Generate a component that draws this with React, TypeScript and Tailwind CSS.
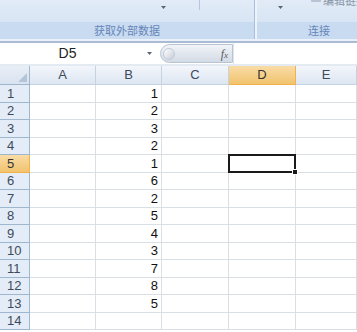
import React from "react";

const vals: (number | null)[] = [1, 2, 3, 2, 1, 6, 2, 5, 4, 3, 7, 8, 5, null];
const cols = ["A", "B", "C", "D", "E"];
const widths = ["w-[66px]", "w-[66px]", "w-[67px]", "w-[67px]", "flex-1"];

function Arrow() {
  return (
    <svg width="5" height="3" viewBox="0 0 5 3" className="block">
      <path d="M0 0 H5 L2.5 3 Z" fill="#5a6678" />
    </svg>
  );
}

export default function App() {
  return (
    <div
      className="w-[357px] h-[332px] overflow-hidden bg-white flex flex-col"
      style={{ fontFamily: '"Liberation Sans", "Noto Sans CJK SC", sans-serif' }}
    >
      {/* Ribbon */}
      <div className="h-[39px] flex bg-[#dee8f5] shrink-0">
        <div className="w-[255px] flex flex-col border-r border-[#a9bfdc]">
          <div className="h-[22px] flex bg-gradient-to-b from-[#e2ebf7] to-[#d8e5f4]">
            <div className="w-[199px] flex justify-end items-start pt-[6px] pr-[33px]">
              <Arrow />
            </div>
            <div className="w-px h-[10px] bg-[#b3c6de]" />
          </div>
          <div className="flex-1 bg-[#c9dbf0] flex items-center justify-center text-[11px] text-[#6585b8]" style={{ fontFamily: '"Noto Sans CJK SC", sans-serif' }}>
            获取外部数据
          </div>
        </div>
        <div className="w-[2px] bg-[#edf3fb]" />
        <div className="flex-1 flex flex-col min-w-0">
          <div className="h-[22px] flex bg-gradient-to-b from-[#e2ebf7] to-[#d8e5f4] overflow-hidden">
            <div className="w-[26px] shrink-0 flex justify-end items-start pt-[6px]">
              <Arrow />
            </div>
            <div className="ml-[28px] -mt-[6px] flex items-start gap-[2px] text-[11px] text-[#8a96a8] leading-[12px] whitespace-nowrap" style={{ fontFamily: '"Noto Sans CJK SC", sans-serif' }}>
              <span className="w-[10px] h-[6px] shrink-0 bg-[#b8c4d4] mt-[2px] rounded-[1px]" />
              <span>编辑链接</span>
            </div>
          </div>
          <div className="flex-1 bg-[#c9dbf0] flex items-center pl-[51px] text-[11px] text-[#6585b8]" style={{ fontFamily: '"Noto Sans CJK SC", sans-serif' }}>
            连接
          </div>
        </div>
      </div>
      <div className="h-[2px] bg-[#eaf1fa] shrink-0" />
      <div className="h-[2px] bg-[#a9bcd4] shrink-0" />

      {/* Formula bar */}
      <div className="h-[21px] flex shrink-0 bg-white">
        <div className="w-[147px] flex items-center justify-center text-[14px] text-[#222] pr-[12px]">
          D5
        </div>
        <div className="w-[13px] flex items-center">
          <Arrow />
        </div>
        <div className="w-[73px] flex items-center my-[1px] rounded-l-full border border-[#b9c4d2] bg-gradient-to-b from-[#f1f4f8] to-[#d3dbe6]">
          <div className="w-[12px] h-[12px] ml-[2px] rounded-full bg-gradient-to-br from-[#ffffff] to-[#c6ced9] border border-[#c1cad6]" />
          <span className="ml-auto mr-[4px] text-[12px] italic text-[#5a5a5a]" style={{ fontFamily: '"Liberation Serif", serif' }}>
            f<span className="text-[9px]">x</span>
          </span>
        </div>
        <div className="w-px bg-[#dfe5ec]" />
        <div className="flex-1 bg-white" />
      </div>
      <div className="h-[2px] bg-[#e4eaf2] shrink-0" />

      {/* Grid */}
      <div className="flex flex-col flex-1 text-[13px] text-[#111]">
        <div className="h-[19px] flex shrink-0">
          <div className="w-[30px] relative bg-gradient-to-b from-[#e9eef6] to-[#d9e3f0] border-r border-b border-[#9eb6ce]">
            <svg width="9" height="9" className="absolute right-[2px] bottom-[2px]">
              <path d="M9 0 V9 H0 Z" fill="#b4c5da" />
            </svg>
          </div>
          {cols.map((c, i) => (
            <div
              key={c}
              className={`${widths[i]} flex items-center justify-center border-r border-b ${
                c === "D"
                  ? "bg-gradient-to-b from-[#f9dca6] to-[#f1c36d] border-[#f2b14a] text-[#333]"
                  : "bg-gradient-to-b from-[#f3f6fb] to-[#dde6f2] border-[#c5d2e2] text-[#3c4a5c]"
              }`}
            >
              {c}
            </div>
          ))}
        </div>
        {vals.map((v, r) => (
          <div key={r} className="h-[17.5px] flex shrink-0">
            <div
              className={`w-[30px] flex items-center pl-[7px] border-r border-b ${
                r === 4
                  ? "bg-gradient-to-b from-[#f9dca6] to-[#f1c36d] border-[#f2b14a] text-[#333]"
                  : "bg-[#e4ecf7] border-[#9eb6ce] text-[#3c4a5c]"
              }`}
            >
              {r + 1}
            </div>
            {cols.map((c, i) => (
              <div
                key={c}
                className={`${widths[i]} relative flex items-center justify-end pr-[3px] border-r border-b border-[#dadfe6]`}
              >
                {c === "B" && v !== null ? v : ""}
                {c === "D" && r === 4 && (
                  <div className="absolute z-10 -left-[1px] -top-[1px] -right-[1px] -bottom-[1px] border-2 border-[#1a1a1a]">
                    <div className="absolute -right-[4px] -bottom-[4px] w-[6px] h-[6px] bg-[#1a1a1a] border border-white" />
                  </div>
                )}
              </div>
            ))}
          </div>
        ))}
      </div>
    </div>
  );
}
